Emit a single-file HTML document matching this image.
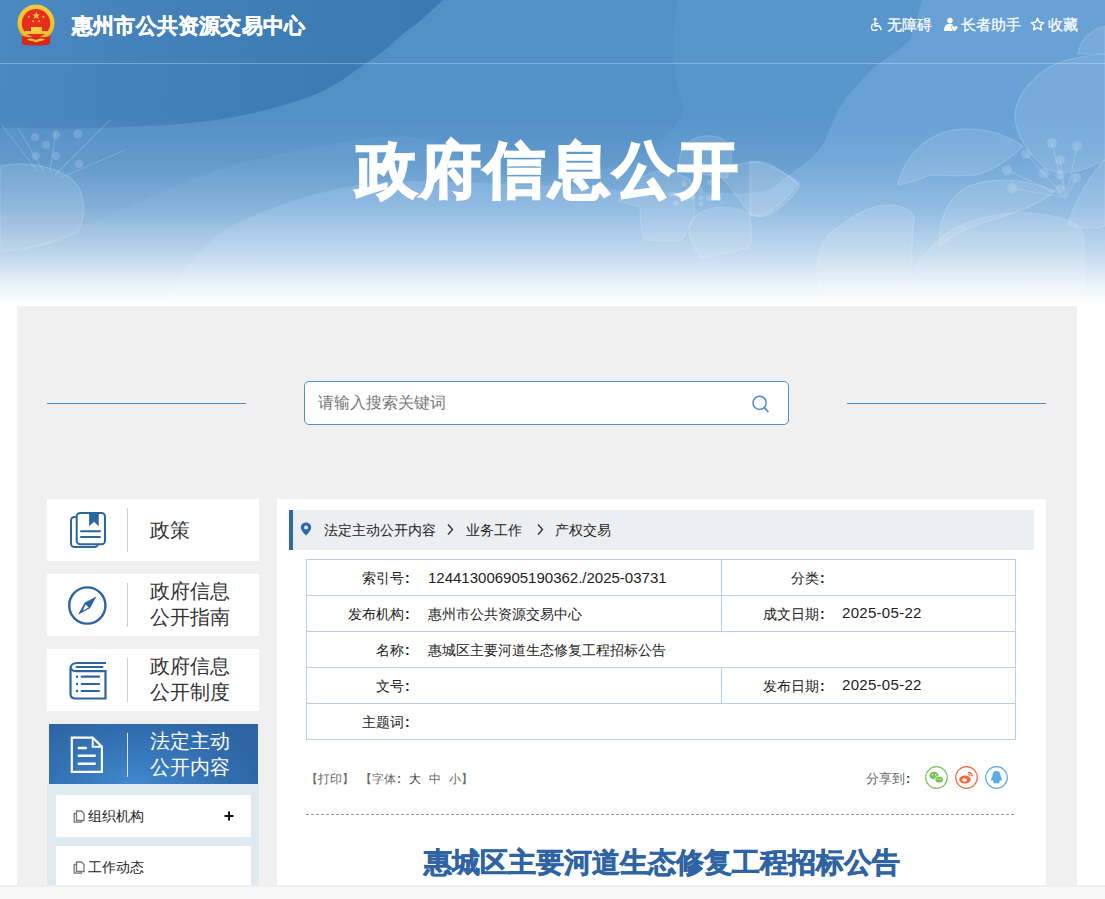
<!DOCTYPE html>
<html><head><meta charset="utf-8">
<style>
html,body{margin:0;padding:0;}
body{width:1105px;height:899px;overflow:hidden;position:relative;background:#fff;font-family:"Liberation Sans",sans-serif;color:#333;}
.a{position:absolute;}
.t{position:absolute;white-space:nowrap;}
.c{display:inline-block;width:14px;text-align:left;padding-left:1px;box-sizing:border-box;font-weight:bold}
</style></head><body>

<!-- BANNER -->
<svg class="a" style="left:0;top:0" width="1105" height="306" viewBox="0 0 1105 306">
<defs>
<linearGradient id="fade" x1="0" y1="0" x2="0" y2="306" gradientUnits="userSpaceOnUse">
<stop offset="0" stop-color="#fff" stop-opacity="0"/>
<stop offset="0.38" stop-color="#fff" stop-opacity="0"/>
<stop offset="0.52" stop-color="#fff" stop-opacity="0.08"/>
<stop offset="0.68" stop-color="#fff" stop-opacity="0.28"/>
<stop offset="0.82" stop-color="#fff" stop-opacity="0.58"/>
<stop offset="0.93" stop-color="#fff" stop-opacity="0.87"/>
<stop offset="0.99" stop-color="#fff" stop-opacity="1"/>
</linearGradient>
<linearGradient id="dk" x1="0" y1="0" x2="440" y2="60" gradientUnits="userSpaceOnUse">
<stop offset="0" stop-color="#4c88c1"/>
<stop offset="0.6" stop-color="#3f7db7"/>
<stop offset="1" stop-color="#3c7ab4"/>
</linearGradient>
</defs>
<rect x="0" y="0" width="1105" height="306" fill="#5390c7"/>
<path d="M679 0 C668 36 672 72 683 108 C678 130 660 145 630 160 C600 172 570 180 540 182 C500 180 470 160 430 140 C400 133 380 136 362 139 C330 144 310 147 290 152 C260 158 240 163 217 170 C190 180 165 190 145 199 C120 210 95 222 72 231 C50 240 25 249 0 257 V306 H1105 V0 Z" fill="#5895cb"/>
<path d="M922 0 C918 15 914 30 910 40 C900 50 890 56 878 64 C865 75 855 88 846 98 C835 112 830 130 824 143 C815 155 808 162 798 168 C785 178 775 186 766 191 C745 195 725 193 705 192 C680 194 655 192 632 190 C550 185 450 181 400 181 C380 182 370 183 362 184 C330 190 310 195 290 202 C260 212 235 222 217 235 C195 255 175 280 163 306 H1105 V0 Z" fill="#67a1d6"/>
<path d="M0 0 H443 C430 12 418 24 405 32 C392 44 380 55 366 63 C350 75 335 86 317 94 C280 108 240 118 190 123 C120 129 60 129 0 128 Z" fill="url(#dk)"/>
<g fill="#fff" fill-opacity="0.11" stroke="#fff" stroke-opacity="0.17" stroke-width="1.2">
<path d="M1105 54 C1075 56 1050 62 1035 78 C1020 92 1014 105 1015 120 C1018 140 1030 155 1045 168 C1065 178 1085 170 1105 160 Z"/>
<path d="M1078 54 C1080 40 1090 30 1105 26 V54 Z"/>
<path d="M898 185 C902 165 915 146 935 136 C955 126 990 124 1023 146 C1010 160 990 172 975 175 C950 178 930 172 923 178 C912 182 905 184 898 185 Z"/>
<path d="M940 246 C938 225 945 200 965 188 C985 178 1020 176 1055 191 C1040 205 1010 215 985 222 C965 228 950 238 940 246 Z"/>
<path d="M917 265 C930 245 950 228 975 220 C1000 212 1030 210 1060 218 C1075 222 1085 228 1084 240 V306 H905 Z"/>
<path d="M817 265 C820 245 828 232 840 226 C858 212 875 205 885 205 C900 204 912 210 914 217 C912 240 911 260 910 306 H820 Z"/>
<path d="M1105 160 C1090 175 1075 200 1068 225 C1085 230 1100 228 1105 226 Z"/>
<path d="M750 162 C760 160 770 163 780 170 C790 176 796 182 800 186 C790 200 780 210 769 215 C760 217 752 216 750 215 Z"/>

<path d="M680 171 C678 158 681 148 687 143 C695 137 705 135 712 136 C722 137 730 142 731 150 C733 160 730 170 727 178 Z"/>
<path d="M718 174 C730 166 745 161 758 162 C772 166 788 175 799 183 C790 195 778 208 763 216 C758 217 753 216 750 214 C740 200 730 185 718 174 Z"/>
<path d="M618 201 C630 185 642 175 654 172 C668 170 680 173 690 180 C694 195 696 208 694 218 C688 230 684 238 680 241 C665 242 652 241 643 239 C641 228 640 216 640 207 Z"/>
<path d="M689 229 C690 218 700 210 718 207 C733 207 745 210 750 216 C752 228 752 240 750 247 C735 252 715 256 701 257 C693 248 689 238 689 229 Z"/>
<path d="M0 166 C30 160 70 168 80 190 C86 205 84 220 78 232 C50 245 25 250 0 252 Z"/>
</g>
<g stroke="#fff" stroke-opacity="0.16" stroke-width="1.2" fill="none">
<path d="M1066 198 L1052 143 M1066 198 L1077 146 M1066 198 L1026 154 M1066 198 L1007 170 M1066 198 L1012 188 M1066 198 L1060 160 M1066 198 L1076 178 M1066 198 L1044 174"/>
<path d="M2 125 L38 172 M18 128 L44 172 M56 130 L50 172 M110 120 L55 175 M125 150 L60 178"/>
</g>
<g fill="#fff" fill-opacity="0.16">
<circle cx="1052" cy="143" r="5"/><circle cx="1077" cy="146" r="5"/><circle cx="1060" cy="160" r="5"/><circle cx="1026" cy="154" r="5"/><circle cx="1007" cy="170" r="5"/><circle cx="1044" cy="173" r="5"/><circle cx="1060" cy="175" r="4.5"/><circle cx="1076" cy="178" r="5"/><circle cx="1012" cy="188" r="5"/><circle cx="1060" cy="189" r="4.5"/>
<circle cx="35" cy="137" r="4"/><circle cx="56" cy="135" r="4"/><circle cx="78" cy="134" r="4.5"/><circle cx="46" cy="145" r="4"/><circle cx="36" cy="156" r="4"/><circle cx="56" cy="156" r="4"/><circle cx="79" cy="164" r="4"/>
<circle cx="684" cy="184" r="2.7"/><circle cx="700.5" cy="190" r="2.7"/><circle cx="710" cy="182.5" r="2.7"/><circle cx="693" cy="197" r="2.7"/><circle cx="701" cy="198" r="2.7"/><circle cx="708.6" cy="198" r="2.7"/><circle cx="676" cy="203" r="2.7"/><circle cx="673" cy="194" r="2.7"/><circle cx="701" cy="204" r="2.7"/>
</g>
<rect x="0" y="0" width="1105" height="306" fill="url(#fade)"/>
<rect x="0" y="63" width="1105" height="1" fill="#fff" fill-opacity="0.28"/>
</svg>

<!-- HEADER -->
<svg class="a" style="left:16px;top:4px" width="40" height="44" viewBox="16 4 40 44">
<defs><radialGradient id="gold" cx="0.5" cy="0.4" r="0.6"><stop offset="0" stop-color="#ffe070"/><stop offset="0.8" stop-color="#f3c22c"/><stop offset="1" stop-color="#d9a21c"/></radialGradient></defs>
<circle cx="36" cy="23.2" r="18.6" fill="url(#gold)"/>
<circle cx="36" cy="23.2" r="14.2" fill="#e62e1e"/>
<path d="M36.3 11.6 L37.3 14.4 L40.2 14.4 L37.9 16.1 L38.8 18.9 L36.3 17.2 L33.8 18.9 L34.7 16.1 L32.4 14.4 L35.3 14.4 Z" fill="#f7c83a"/>
<circle cx="28.8" cy="16.8" r="1" fill="#f7c83a"/><circle cx="33.1" cy="21.2" r="1" fill="#f7c83a"/><circle cx="39.1" cy="21.2" r="1" fill="#f7c83a"/><circle cx="43.4" cy="16.8" r="1" fill="#f7c83a"/>
<rect x="31" y="27" width="10.8" height="4.5" fill="#f7d04a"/>
<rect x="25" y="31" width="22.8" height="3" fill="#f3c63a"/>
<path d="M22 35.5 C26 38 30 37 36 36.5 C42 37 46 38 50.5 35.5 L50 44 C46 46 40 45.5 36 45.5 C32 45.5 26 46 22 44 Z" fill="#d8261a"/>
<path d="M27 39.5 C30 37.8 33 38.2 36 40 C39 38.2 42 37.8 45 39.5 C42 41 39 41 36 42.5 C33 41 30 41 27 39.5Z" fill="#f5c63a"/>
</svg>
<div class="t" style="left:72px;top:12px;font-size:21px;line-height:28px;letter-spacing:0.2px;font-weight:bold;color:#fff;-webkit-text-stroke:0.4px #fff">惠州市公共资源交易中心</div>

<svg class="a" style="left:870px;top:17px" width="14" height="15" viewBox="0 0 14 15">
<circle cx="5.2" cy="2.3" r="1.6" fill="#fff"/>
<path d="M5 4.5 V9 H9.3 L11.5 13.2" fill="none" stroke="#fff" stroke-width="1.6"/>
<path d="M3.6 6.8 C1.5 7.6 1 10 1.8 11.8 C2.8 13.7 5.8 14 7.5 12.3" fill="none" stroke="#fff" stroke-width="1.4"/>
<path d="M5 6.5 H8.5" stroke="#fff" stroke-width="1.3"/>
</svg>
<svg class="a" style="left:943px;top:17px" width="15" height="15" viewBox="0 0 15 15">
<circle cx="7" cy="3.5" r="2.7" fill="#fff"/>
<path d="M1 14 C1 9 3 6.8 7 6.8 C8.5 6.8 9.5 7.3 10.2 8 C8.5 8.3 7.5 9.8 8.3 11.5 L10 14 Z" fill="#fff"/>
<path d="M11.5 14.5 L8.8 11.6 C7.8 10.4 8.6 8.8 9.9 8.9 C10.6 8.9 11.1 9.4 11.5 9.9 C11.9 9.4 12.4 8.9 13.1 8.9 C14.4 8.8 15.2 10.4 14.2 11.6 Z" fill="#fff"/>
</svg>
<svg class="a" style="left:1030px;top:17px" width="15" height="15" viewBox="0 0 15 15">
<path d="M7.5 1.3 L9.3 5.2 L13.6 5.7 L10.4 8.6 L11.3 12.9 L7.5 10.7 L3.7 12.9 L4.6 8.6 L1.4 5.7 L5.7 5.2 Z" fill="none" stroke="#fff" stroke-width="1.5" stroke-linejoin="round"/>
</svg>
<div class="t" style="left:887px;top:15px;font-size:15px;line-height:20px;color:#fff;-webkit-text-stroke:0.25px #fff">无障碍</div>
<div class="t" style="left:961px;top:15px;font-size:15px;line-height:20px;color:#fff;-webkit-text-stroke:0.25px #fff">长者助手</div>
<div class="t" style="left:1048px;top:15px;font-size:15px;line-height:20px;color:#fff;-webkit-text-stroke:0.25px #fff">收藏</div>

<div class="t" style="left:356px;top:130px;font-size:61px;line-height:80px;letter-spacing:3.2px;font-weight:bold;color:#fff;-webkit-text-stroke:2px #fff">政府信息公开</div>

<!-- GRAY CONTAINER -->
<div class="a" style="left:17px;top:306px;width:1060px;height:579px;background:#f0f0f0"></div>
<div class="a" style="left:47px;top:403px;width:199px;height:1px;background:#4a8cc8"></div>
<div class="a" style="left:847px;top:403px;width:199px;height:1px;background:#4a8cc8"></div>
<div class="a" style="left:304px;top:381px;width:483px;height:42px;border:1px solid #4d90cb;border-radius:5px;background:#fff"></div>
<svg class="a" style="left:748px;top:391px" width="24" height="24" viewBox="0 0 24 24"><circle cx="11.6" cy="11.8" r="6.6" fill="none" stroke="#4a8fca" stroke-width="1.5"/><path d="M16.3 16.6 L20 20.6" stroke="#4a8fca" stroke-width="1.6" stroke-linecap="round"/></svg>
<div class="t" style="left:318px;top:392px;font-size:16px;line-height:22px;color:#777">请输入搜索关键词</div>

<!-- SIDEBAR -->
<div class="a" style="left:47px;top:499px;width:212px;height:62px;background:#fff"></div>
<div class="a" style="left:47px;top:574px;width:212px;height:62px;background:#fff"></div>
<div class="a" style="left:47px;top:649px;width:212px;height:62px;background:#fff"></div>
<div class="a" style="left:49px;top:724px;width:209px;height:60px;background:radial-gradient(ellipse 130px 70px at 40% 100%,#4189cf 0%,#3677ba 45%,#2e66a4 100%)"></div>
<div class="a" style="left:47px;top:784px;width:212px;height:101px;background:#dfe9f0"></div>
<div class="a" style="left:56px;top:795px;width:195px;height:42px;background:#fff"></div>
<div class="a" style="left:56px;top:846px;width:195px;height:39px;background:#fff"></div>

<!-- SIDEBAR ICONS -->
<svg class="a" style="left:66px;top:508px" width="44" height="44" viewBox="0 0 44 44">
<rect x="5" y="9" width="27" height="30" rx="3.5" fill="none" stroke="#2d659f" stroke-width="2"/>
<rect x="10.7" y="4.9" width="28.3" height="31.4" rx="3.5" fill="#fff" stroke="#2d659f" stroke-width="2"/>
<path d="M23.1 4 H32.8 V18.2 L28 13.7 L23.1 18.2 Z" fill="#2d659f"/>
<path d="M15 23.2 H34 M15 28.9 H34" stroke="#2d659f" stroke-width="2" stroke-linecap="round"/>
</svg>
<div class="a" style="left:127px;top:508px;width:1px;height:44px;background:#cfcfcf"></div>

<svg class="a" style="left:66px;top:584px" width="44" height="44" viewBox="0 0 44 44">
<circle cx="21.3" cy="21.5" r="18.1" fill="none" stroke="#2d659f" stroke-width="2.4"/>
<path d="M30.6 12.2 L18.6 18.8 L12 30.8 L24 24.2 Z" fill="#2d659f"/>
<path d="M19.6 20.4 L16.8 26.8 L22.6 23.4 Z" fill="#fff"/>
</svg>
<div class="a" style="left:127px;top:583px;width:1px;height:44px;background:#cfcfcf"></div>

<svg class="a" style="left:66px;top:658px" width="44" height="44" viewBox="0 0 44 44">
<path d="M40 5 H11 C7 5 4.5 7.5 4.5 10.5 V36 C4.5 39 6.5 40.5 9.5 40.5 H39.5 V13.2 H10 C7 13.2 5 11.5 5 9.5" fill="none" stroke="#2d659f" stroke-width="2.2"/>
<path d="M10.5 9 H36.5" stroke="#2d659f" stroke-width="2" stroke-linecap="round"/>
<path d="M15.7 18.7 H33 M15.7 26 H33 M15.7 33 H33" stroke="#2d659f" stroke-width="2.2" stroke-linecap="round"/>
<circle cx="11.1" cy="18.7" r="1.2" fill="#2d659f"/><circle cx="11.1" cy="26" r="1.2" fill="#2d659f"/><circle cx="11.1" cy="33" r="1.2" fill="#2d659f"/>
</svg>
<div class="a" style="left:127px;top:658px;width:1px;height:44px;background:#cfcfcf"></div>

<svg class="a" style="left:68px;top:734px" width="40" height="42" viewBox="0 0 40 42">
<path d="M3.8 3.7 H24.7 L33.9 12.8 V37.9 H3.8 Z" fill="none" stroke="#fff" stroke-width="2.2"/>
<path d="M24.7 3.7 V12.8 H33.9" fill="none" stroke="#fff" stroke-width="2"/>
<path d="M9.8 14 H18.8 M9.8 21.8 H27.7 M9.8 29.8 H27.7" stroke="#fff" stroke-width="2.4"/>
</svg>
<div class="a" style="left:127px;top:733px;width:1px;height:44px;background:#d8e4f0"></div>

<svg class="a" style="left:72px;top:808px" width="14" height="16" viewBox="0 0 14 16">
<path d="M4.5 3 H9.5 L12 5.5 V12.5 H4.5 Z" fill="none" stroke="#777" stroke-width="1.3"/>
<path d="M4.5 5.5 H2.2 V14.2 H9.5 V12.5" fill="none" stroke="#777" stroke-width="1.3"/>
</svg>
<div class="t" style="left:88px;top:806px;font-size:14px;line-height:20px;color:#222">组织机构</div>
<svg class="a" style="left:223px;top:810px" width="12" height="12" viewBox="0 0 12 12"><path d="M1.5 6 H10.5 M6 1.5 V10.5" stroke="#111" stroke-width="2"/></svg>
<svg class="a" style="left:72px;top:859px" width="14" height="16" viewBox="0 0 14 16">
<path d="M4.5 3 H9.5 L12 5.5 V12.5 H4.5 Z" fill="none" stroke="#777" stroke-width="1.3"/>
<path d="M4.5 5.5 H2.2 V14.2 H9.5 V12.5" fill="none" stroke="#777" stroke-width="1.3"/>
</svg>
<div class="t" style="left:88px;top:857px;font-size:14px;line-height:20px;color:#222">工作动态</div>

<div class="t" style="left:150px;top:517px;font-size:20px;line-height:26px;color:#333">政策</div>
<div class="t" style="left:150px;top:578px;font-size:20px;line-height:26px;color:#333">政府信息<br>公开指南</div>
<div class="t" style="left:150px;top:653px;font-size:20px;line-height:26px;color:#333">政府信息<br>公开制度</div>
<div class="t" style="left:150px;top:728px;font-size:20px;line-height:26px;color:#fff">法定主动<br>公开内容</div>

<!-- MAIN -->
<div class="a" style="left:277px;top:499px;width:769px;height:386px;background:#fff"></div>
<div class="a" style="left:289px;top:510px;width:745px;height:40px;background:#eceff2"></div>
<div class="a" style="left:289px;top:510px;width:4px;height:40px;background:#2f6aa8"></div>
<svg class="a" style="left:300px;top:522px" width="12" height="14" viewBox="0 0 12 14"><path d="M6 0.5C3 0.5 0.8 2.7 0.8 5.5C0.8 8.8 6 13.5 6 13.5S11.2 8.8 11.2 5.5C11.2 2.7 9 0.5 6 0.5Z" fill="#2f6aa8"/><circle cx="6" cy="5.4" r="1.9" fill="#eceff2"/></svg>
<div class="t" style="left:324px;top:520px;font-size:14px;line-height:20px;color:#222">法定主动公开内容</div>
<div class="t" style="left:466px;top:520px;font-size:14px;line-height:20px;color:#222">业务工作</div>
<div class="t" style="left:555px;top:520px;font-size:14px;line-height:20px;color:#222">产权交易</div>
<svg class="a" style="left:446px;top:523px" width="9" height="13" viewBox="0 0 9 13"><path d="M2 1.5 L6.5 6.5 L2 11.5" fill="none" stroke="#333" stroke-width="1.4"/></svg>
<svg class="a" style="left:536px;top:523px" width="9" height="13" viewBox="0 0 9 13"><path d="M2 1.5 L6.5 6.5 L2 11.5" fill="none" stroke="#333" stroke-width="1.4"/></svg>

<!-- TABLE -->
<div class="a" style="left:306px;top:559px;width:708px;height:179px;border:1px solid #b9d1e6"></div>
<div class="a" style="left:307px;top:595px;width:708px;height:1px;background:#b9d1e6"></div>
<div class="a" style="left:307px;top:631px;width:708px;height:1px;background:#b9d1e6"></div>
<div class="a" style="left:307px;top:667px;width:708px;height:1px;background:#b9d1e6"></div>
<div class="a" style="left:307px;top:703px;width:708px;height:1px;background:#b9d1e6"></div>
<div class="a" style="left:721px;top:560px;width:1px;height:71px;background:#b9d1e6"></div>
<div class="a" style="left:721px;top:668px;width:1px;height:35px;background:#b9d1e6"></div>

<div class="t" style="left:306px;top:568px;width:112px;text-align:right;font-size:14px;line-height:20px;color:#222">索引号<span class="c">:</span></div>
<div class="t" style="left:306px;top:604px;width:112px;text-align:right;font-size:14px;line-height:20px;color:#222">发布机构<span class="c">:</span></div>
<div class="t" style="left:306px;top:640px;width:112px;text-align:right;font-size:14px;line-height:20px;color:#222">名称<span class="c">:</span></div>
<div class="t" style="left:306px;top:676px;width:112px;text-align:right;font-size:14px;line-height:20px;color:#222">文号<span class="c">:</span></div>
<div class="t" style="left:306px;top:712px;width:112px;text-align:right;font-size:14px;line-height:20px;color:#222">主题词<span class="c">:</span></div>
<div class="t" style="left:428px;top:568px;font-size:15px;line-height:20px;color:#222">124413006905190362./2025-03731</div>
<div class="t" style="left:428px;top:604px;font-size:14px;line-height:20px;color:#222">惠州市公共资源交易中心</div>
<div class="t" style="left:428px;top:640px;font-size:14px;line-height:20px;color:#222">惠城区主要河道生态修复工程招标公告</div>
<div class="t" style="left:721px;top:568px;width:112px;text-align:right;font-size:14px;line-height:20px;color:#222">分类<span class="c">:</span></div>
<div class="t" style="left:721px;top:604px;width:112px;text-align:right;font-size:14px;line-height:20px;color:#222">成文日期<span class="c">:</span></div>
<div class="t" style="left:721px;top:676px;width:112px;text-align:right;font-size:14px;line-height:20px;color:#222">发布日期<span class="c">:</span></div>
<div class="t" style="left:842px;top:603px;font-size:15px;line-height:20px;letter-spacing:0.3px;color:#222">2025-05-22</div>
<div class="t" style="left:842px;top:675px;font-size:15px;line-height:20px;letter-spacing:0.3px;color:#222">2025-05-22</div>

<div class="t" style="left:306px;top:770px;font-size:12px;line-height:18px;color:#666">【打印】</div>
<div class="t" style="left:360px;top:770px;font-size:12px;line-height:18px;color:#666">【字体<span style="display:inline-block;width:12px;padding-left:1px;box-sizing:border-box;font-weight:bold">:</span></div>
<div class="t" style="left:409px;top:770px;font-size:12px;line-height:18px;color:#333">大</div>
<div class="t" style="left:429px;top:770px;font-size:12px;line-height:18px;color:#666">中</div>
<div class="t" style="left:449px;top:770px;font-size:12px;line-height:18px;color:#666">小】</div>
<div class="t" style="left:866px;top:770px;font-size:13px;line-height:18px;color:#666">分享到<span style="display:inline-block;width:13px;padding-left:1px;box-sizing:border-box;font-weight:bold;color:#333">:</span></div>

<svg class="a" style="left:923px;top:764px" width="90" height="27" viewBox="0 0 90 27">
<circle cx="13.5" cy="13.5" r="10.8" fill="none" stroke="#7cc25a" stroke-width="1.2"/>
<ellipse cx="11" cy="11.5" rx="4.6" ry="3.8" fill="#7cc25a"/>
<ellipse cx="16.2" cy="15.6" rx="4.2" ry="3.4" fill="#7cc25a" stroke="#fff" stroke-width="0.8"/>
<circle cx="9.5" cy="10.8" r="0.7" fill="#fff"/><circle cx="12.6" cy="10.8" r="0.7" fill="#fff"/>
<circle cx="14.8" cy="15.2" r="0.6" fill="#fff"/><circle cx="17.6" cy="15.2" r="0.6" fill="#fff"/>
<circle cx="43.5" cy="13.5" r="10.8" fill="none" stroke="#f26b3a" stroke-width="1.2"/>
<ellipse cx="42" cy="15.5" rx="5.8" ry="4" fill="#f26b3a"/>
<ellipse cx="41.5" cy="16" rx="2.4" ry="1.7" fill="#fff"/>
<path d="M45 8.5 C47.5 8.3 49.5 10 49 12.5" fill="none" stroke="#f26b3a" stroke-width="1.3"/>
<path d="M45.3 10.5 C46.5 10.5 47.3 11.2 47 12.3" fill="none" stroke="#f26b3a" stroke-width="1.1"/>
<circle cx="73.5" cy="13.5" r="10.8" fill="none" stroke="#5aace6" stroke-width="1.2"/>
<path d="M73.5 7 C70.5 7 69.3 9.5 69.5 12 C68.2 13.5 67.8 15.8 68.6 17.2 C69.2 16.8 69.6 16.3 69.8 16 C70 17 70.6 17.7 71 18 C70 18.5 70.2 19.5 72 19.5 C73 19.5 73.3 19 73.5 18.8 C73.7 19 74 19.5 75 19.5 C76.8 19.5 77 18.5 76 18 C76.4 17.7 77 17 77.2 16 C77.4 16.3 77.8 16.8 78.4 17.2 C79.2 15.8 78.8 13.5 77.5 12 C77.7 9.5 76.5 7 73.5 7 Z" fill="#5aace6"/>
</svg>
<div class="a" style="left:306px;top:814px;width:710px;height:1px;background:repeating-linear-gradient(90deg,#999 0,#999 3px,transparent 3px,transparent 5px)"></div>
<div class="t" style="left:277px;top:843px;width:769px;text-align:center;font-size:28px;line-height:40px;font-weight:bold;color:#2e63a4;-webkit-text-stroke:0.6px #2e63a4">惠城区主要河道生态修复工程招标公告</div>

<!-- BOTTOM STRIP -->
<div class="a" style="left:0;top:885px;width:1105px;height:14px;background:#f8f8f8;border-top:2px solid #eeeeee;box-sizing:border-box"></div>

</body></html>
